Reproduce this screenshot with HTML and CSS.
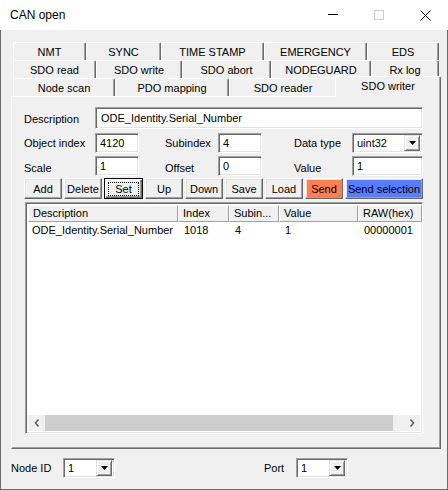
FILE: index.html
```html
<!DOCTYPE html>
<html lang="en">
<head>
  <meta charset="UTF-8" />
  <title>CAN open</title>
  <link rel="stylesheet" href="styles.css">
</head>
<body>
  <div class="window">
    <div class="titlebar">
      <span class="title">CAN open</span>
      <div class="caption">
        <span class="cap-btn"><svg width="10" height="10"><path d="M0 4.5h10" stroke="#000" /></svg></span>
        <span class="cap-btn"><svg width="10" height="10"><rect x="0.5" y="0.5" width="9" height="9" fill="none" stroke="#ccc" /></svg></span>
        <span class="cap-btn"><svg width="11" height="11"><path d="M0.5 0.5l10 10M10.5 0.5l-10 10" stroke="#000" /></svg></span>
      </div>
    </div>

    <div class="client">
      <!-- tab headers, three rows -->
      <div class="tabstrip">
        <div class="tab-row row-1">
          <div class="tab">NMT</div>
          <div class="tab">SYNC</div>
          <div class="tab">TIME STAMP</div>
          <div class="tab">EMERGENCY</div>
          <div class="tab">EDS</div>
        </div>
        <div class="tab-row row-2">
          <div class="tab">SDO read</div>
          <div class="tab">SDO write</div>
          <div class="tab">SDO abort</div>
          <div class="tab">NODEGUARD</div>
          <div class="tab">Rx log</div>
        </div>
        <div class="tab-row row-3">
          <div class="tab">Node scan</div>
          <div class="tab">PDO mapping</div>
          <div class="tab">SDO reader</div>
          <div class="tab active">SDO writer</div>
        </div>
      </div>

      <div class="panel">
        <div class="fields">
          <label class="lbl">Description</label>
          <input class="edit field-wide" type="text" value="ODE_Identity.Serial_Number" />

          <label class="lbl">Object index</label>
          <input class="edit" type="text" value="4120" />
          <label class="lbl lbl-mid">Subindex</label>
          <input class="edit" type="text" value="4" />
          <label class="lbl lbl-right">Data type</label>
          <div class="combo">
            <span class="combo-text">uint32</span>
            <span class="combo-drop"><svg width="7" height="4"><path d="M0 0h7L3.5 4z" /></svg></span>
          </div>

          <label class="lbl lbl-low">Scale</label>
          <input class="edit" type="text" value="1" />
          <label class="lbl lbl-mid lbl-low">Offset</label>
          <input class="edit" type="text" value="0" />
          <label class="lbl lbl-right lbl-low">Value</label>
          <input class="edit" type="text" value="1" />
        </div>

        <div class="buttons">
          <button class="btn">Add</button>
          <button class="btn">Delete</button>
          <button class="btn btn-default"><span class="focus">Set</span></button>
          <button class="btn">Up</button>
          <button class="btn">Down</button>
          <button class="btn">Save</button>
          <button class="btn">Load</button>
          <button class="btn btn-send">Send</button>
          <button class="btn btn-wide btn-selection">Send selection</button>
        </div>

        <div class="listview">
          <div class="lv-head">
            <span>Description</span>
            <span>Index</span>
            <span>Subin...</span>
            <span>Value</span>
            <span>RAW(hex)</span>
          </div>
          <div class="lv-body">
            <div class="lv-row">
              <span>ODE_Identity.Serial_Number</span>
              <span>1018</span>
              <span>4</span>
              <span>1</span>
              <span>00000001</span>
            </div>
          </div>
          <div class="hscroll">
            <span class="sb-btn"><svg width="6" height="8"><path d="M4.5 0.5L1.5 4l3 3.5" fill="none" stroke="#606060" stroke-width="1.6" /></svg></span>
            <div class="sb-track"><div class="sb-thumb"></div></div>
            <span class="sb-btn"><svg width="6" height="8"><path d="M1.5 0.5L4.5 4l-3 3.5" fill="none" stroke="#606060" stroke-width="1.6" /></svg></span>
          </div>
        </div>
      </div>

      <div class="footer">
        <label class="foot-lbl">Node ID</label>
        <div class="combo combo-small">
          <span class="combo-text">1</span>
          <span class="combo-drop"><svg width="7" height="4"><path d="M0 0h7L3.5 4z" /></svg></span>
        </div>
        <label class="foot-lbl port-lbl">Port</label>
        <div class="combo combo-small">
          <span class="combo-text">1</span>
          <span class="combo-drop"><svg width="7" height="4"><path d="M0 0h7L3.5 4z" /></svg></span>
        </div>
      </div>
    </div>
  </div>
</body>
</html>
```

FILE: styles.css
```css
* {
  box-sizing: border-box;
}

body {
  margin: 0;
  font-family: "Liberation Sans", Arial, sans-serif;
  font-size: 11px;
  color: #000;
  background: #fff;
}

.window {
  width: 448px;
  height: 490px;
  display: flex;
  flex-direction: column;
}

/* title bar */
.titlebar {
  height: 30px;
  flex: none;
  display: flex;
  align-items: center;
  background: #fff;
}

.title {
  padding-left: 10px;
  font-size: 12px;
}

.caption {
  margin-left: auto;
  display: flex;
}

.cap-btn {
  width: 46px;
  height: 30px;
  display: flex;
  align-items: center;
  justify-content: center;
}

.client {
  flex: 1;
  background: #f0f0f0;
  border: 1px solid #6b6b6b;
  border-top: 0;
  padding-top: 12px;
}

/* tabs */
.tabstrip {
  padding-left: 12px;
}

.tab-row {
  display: grid;
  height: 18px;
}

.row-1 {
  grid-template-columns: 73px 75px 103px 103px 72px;
}

.row-2 {
  grid-template-columns: 83px 86px 89px 100px 68px;
}

.row-3 {
  grid-template-columns: 102px 114px 108px 102px;
}

.tab {
  height: 18px;
  display: flex;
  align-items: center;
  justify-content: center;
  background: #f0f0f0;
  border-top: 1px solid #fff;
  border-left: 1px solid #fff;
  border-right: 1px solid #696969;
  box-shadow: inset -1px 0 #a0a0a0;
  border-radius: 2px 2px 0 0;
  white-space: nowrap;
}

.tab.active {
  position: relative;
  z-index: 1;
  height: 21px;
  margin: -2px -2px 0 -2px;
  padding-bottom: 3px;
}

.panel {
  margin-left: 10px;
  width: 430px;
  height: 353px;
  border: 1px solid;
  border-color: #fff #696969 #696969 #fff;
  box-shadow: inset -1px -1px #a0a0a0;
  padding: 10px 0 0 12px;
}

/* sunken edit fields */
.edit,
.combo,
.listview {
  border: 1px solid;
  border-color: #a0a0a0 #fff #fff #a0a0a0;
  box-shadow: inset 1px 1px #696969, inset -1px -1px #e3e3e3;
  background: #fff;
}

.fields {
  display: grid;
  grid-template-columns: 71px 44px 79px 44px 90px 71px;
  grid-template-rows: 23px 20px 20px;
  row-gap: 3px;
  align-items: center;
}

.lbl-mid {
  padding-left: 26px;
}

.lbl-right {
  padding-left: 32px;
}

.lbl-low {
  padding-top: 3px;
}

.edit {
  height: 20px;
  width: 100%;
  margin: 0;
  padding: 0 4px;
  font: inherit;
  color: #000;
  outline: none;
}

.field-wide {
  grid-column: 2 / 7;
  height: 22px;
  align-self: start;
  padding: 0 5px;
}

.combo {
  height: 20px;
  display: flex;
  align-items: center;
  padding: 2px;
}

.combo-text {
  flex: 1;
  padding-left: 2px;
}

.combo-drop {
  width: 16px;
  height: 16px;
  display: flex;
  align-items: center;
  justify-content: center;
  background: #f0f0f0;
  border: 1px solid;
  border-color: #e3e3e3 #696969 #696969 #e3e3e3;
  box-shadow: inset 1px 1px #fff, inset -1px -1px #a0a0a0;
}

/* button row */
.buttons {
  display: flex;
  gap: 2px;
  margin-top: 2px;
  height: 21px;
}

.btn {
  width: 38px;
  height: 21px;
  margin: 0;
  padding: 0;
  font: inherit;
  color: #000;
  background: #f0f0f0;
  border: 1px solid;
  border-color: #fff #696969 #696969 #fff;
  box-shadow: inset -1px -1px #a0a0a0, inset 1px 1px #e3e3e3;
  white-space: nowrap;
}

.btn-default {
  width: 39px;
  border: 1px solid #000;
  box-shadow: inset 1px 1px #fff, inset -1px -1px #696969, inset -2px -2px #a0a0a0;
  padding: 3px 3px 2px 3px;
}

.focus {
  display: block;
  height: 100%;
  border: 1px dotted #000;
  line-height: 12px;
}

.btn-send {
  background: #ff7f50;
}

.btn-wide {
  width: 78px;
}

.btn-selection {
  background: #5a7dff;
}

/* list view */
.listview {
  margin: 3px 0 0 1px;
  width: 398px;
  height: 232px;
  padding: 2px;
  display: flex;
  flex-direction: column;
}

.lv-head,
.lv-row {
  display: grid;
  grid-template-columns: 150px 51px 50px 79px 64px;
  height: 17px;
  white-space: nowrap;
}

.lv-head span {
  background: #f0f0f0;
  border-top: 1px solid #fff;
  border-left: 1px solid #fff;
  border-right: 1px solid #a0a0a0;
  border-bottom: 1px solid #a0a0a0;
  padding-left: 4px;
  line-height: 15px;
  overflow: hidden;
}

.lv-body {
  flex: 1;
  background: #fff;
}

.lv-row span {
  padding-left: 6px;
  line-height: 17px;
}

.lv-row span:first-child {
  padding-left: 4px;
}

.hscroll {
  height: 16px;
  display: flex;
  background: #f0f0f0;
}

.sb-btn {
  width: 17px;
  display: flex;
  align-items: center;
  justify-content: center;
}

.sb-track {
  flex: 1;
}

.sb-thumb {
  width: 348px;
  height: 100%;
  background: #cdcdcd;
}

/* node / port selectors */
.footer {
  height: 40px;
  display: flex;
  align-items: center;
  padding: 0 0 2px 10px;
}

.foot-lbl {
  width: 52px;
}

.port-lbl {
  width: 32px;
  margin-left: 149px;
}

.combo-small {
  width: 52px;
}
```
